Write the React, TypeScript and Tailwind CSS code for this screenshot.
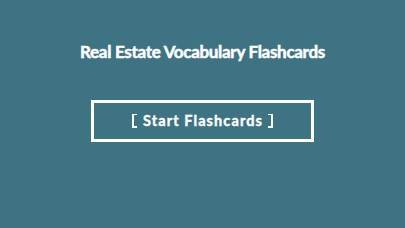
export default function App() {
    return (
        <div
            className="w-[405px] h-[228px] bg-[#3e7383] flex flex-col items-center text-white"
            style={{ fontFamily: 'Lato, "Open Sans", sans-serif' }}
        >
            <h1 className="mt-[41px] text-[17px] leading-[21px] font-bold tracking-[-0.3px] [-webkit-text-stroke:0.5px_#fff]">
                Real Estate Vocabulary Flashcards
            </h1>

            {/* Start button */}
            <button className="mt-[38px] w-[223px] h-[42px] border-[3px] border-white flex items-center justify-center">
                <div className="flex items-center">
                    <span className="w-[5px] h-[14px] border-l-2 border-t border-b-2 border-white" />
                    <span className="ml-[6px] mr-[5px] text-[14.5px] leading-[16px] font-bold tracking-[1.1px] [-webkit-text-stroke:0.4px_#fff]">
                        Start Flashcards
                    </span>
                    <span className="w-[5px] h-[14px] border-r-2 border-t border-b-2 border-white" />
                </div>
            </button>
        </div>
    );
}
